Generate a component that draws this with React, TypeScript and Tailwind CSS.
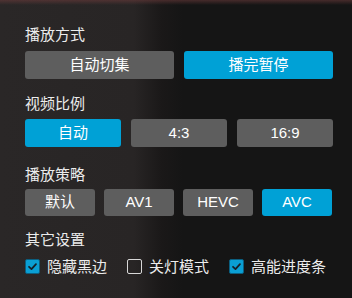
import { useState } from 'react';

const font = "font-['Liberation_Sans','Noto_Sans_CJK_SC',sans-serif]";

const Btn = ({ label, active, w }: { label: string; active?: boolean; w: string }) => (
    <div
        className={`${w} h-full rounded-[3px] flex items-center justify-center text-[15px] text-white ${active ? 'bg-[#00a1d6]' : 'bg-[#5e5e5e]'}`}
    >
        {label}
    </div>
);

const Check = ({ label, checked }: { label: string; checked: boolean }) => (
    <label className="flex items-center gap-[7px] text-[15px] text-[#ececec] leading-none">
        {checked ? (
            <span className="w-[15px] h-[15px] rounded-[2px] bg-[#0a9fd4] border border-[#0b5f80] flex items-center justify-center">
                <svg width="11" height="11" viewBox="0 0 12 12" fill="none">
                    <path d="M2.2 6.3 L4.9 8.9 L9.8 3.4" stroke="#162028" strokeWidth="1.9" strokeLinecap="round" strokeLinejoin="round" />
                </svg>
            </span>
        ) : (
            <span className="w-[15px] h-[15px] rounded-[2px] border-[1.5px] border-[#d8d8d8]" />
        )}
        <span>{label}</span>
    </label>
);

export default function App() {
    const [mode] = useState('播完暂停');

    return (
        <div
            className={`${font} w-[352px] h-[298px] overflow-hidden pl-[25px] pt-[25px] bg-[#151515] bg-[linear-gradient(to_bottom,rgba(110,60,60,0.55)_0px,rgba(0,0,0,0)_5px),linear-gradient(to_right,#2a2727_0%,#282525_38%,#1a1818_46%,#151515_52%)]`}
        >
            {/* 播放方式 */}
            <div className="h-5 leading-5 text-[15px] text-[#ececec]">播放方式</div>
            <div className="mt-[6px] h-7 flex gap-[10px] w-[308px]">
                <Btn label="自动切集" w="w-[149px]" active={mode === '自动切集'} />
                <Btn label="播完暂停" w="w-[149px]" active={mode === '播完暂停'} />
            </div>

            {/* 视频比例 */}
            <div className="mt-[15px] h-5 leading-5 text-[15px] text-[#ececec]">视频比例</div>
            <div className="mt-[5px] h-[28px] flex gap-[10px] w-[308px]">
                <Btn label="自动" w="w-[96px]" active />
                <Btn label="4:3" w="w-[96px]" />
                <Btn label="16:9" w="w-[96px]" />
            </div>

            {/* 播放策略 */}
            <div className="mt-[18px] h-5 leading-5 text-[15px] text-[#ececec]">播放策略</div>
            <div className="mt-[4px] h-[27px] flex gap-[9px] w-[308px]">
                <Btn label="默认" w="w-[70px]" />
                <Btn label="AV1" w="w-[70px]" />
                <Btn label="HEVC" w="w-[70px]" />
                <Btn label="AVC" w="w-[70px]" active />
            </div>

            {/* 其它设置 */}
            <div className="mt-[14px] h-5 leading-5 text-[15px] text-[#ececec]">其它设置</div>
            <div className="mt-[8px] h-4 flex items-center gap-[20px]">
                <Check label="隐藏黑边" checked />
                <Check label="关灯模式" checked={false} />
                <Check label="高能进度条" checked />
            </div>
        </div>
    );
}
